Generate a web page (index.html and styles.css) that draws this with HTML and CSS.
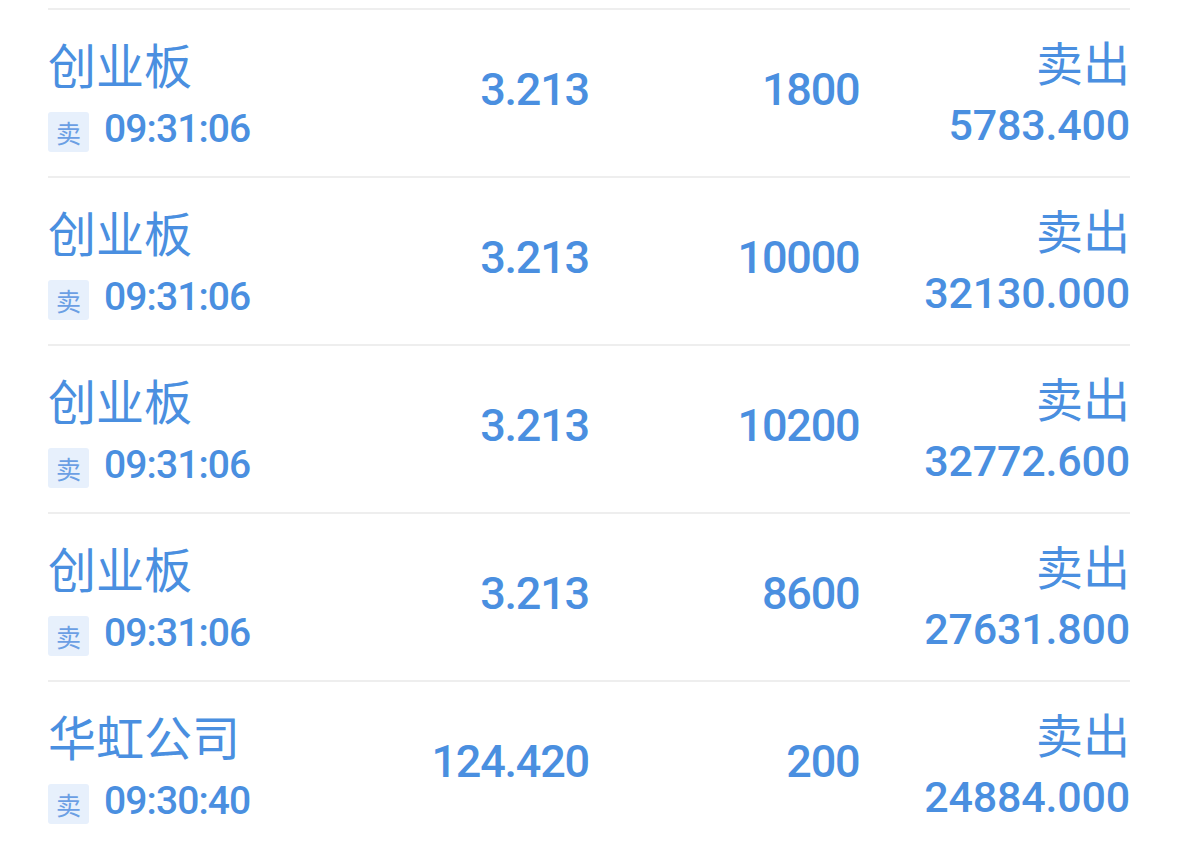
FILE: index.html
```html
<!DOCTYPE html>
<html lang="zh-CN">
<head>
<meta charset="utf-8">
<title>成交明细</title>
<link rel="stylesheet" href="styles.css">
</head>
<body>
<div class="list">
  <div class="row">
    <div class="col-name">
      <div class="name">创业板</div>
      <div class="sub"><span class="badge">卖</span><span class="time">09:31:06</span></div>
    </div>
    <div class="num">3.213</div>
    <div class="num">1800</div>
    <div class="col-right">
      <div class="dir">卖出</div>
      <div class="amount">5783.400</div>
    </div>
  </div>
  <div class="row">
    <div class="col-name">
      <div class="name">创业板</div>
      <div class="sub"><span class="badge">卖</span><span class="time">09:31:06</span></div>
    </div>
    <div class="num">3.213</div>
    <div class="num">10000</div>
    <div class="col-right">
      <div class="dir">卖出</div>
      <div class="amount">32130.000</div>
    </div>
  </div>
  <div class="row">
    <div class="col-name">
      <div class="name">创业板</div>
      <div class="sub"><span class="badge">卖</span><span class="time">09:31:06</span></div>
    </div>
    <div class="num">3.213</div>
    <div class="num">10200</div>
    <div class="col-right">
      <div class="dir">卖出</div>
      <div class="amount">32772.600</div>
    </div>
  </div>
  <div class="row">
    <div class="col-name">
      <div class="name">创业板</div>
      <div class="sub"><span class="badge">卖</span><span class="time">09:31:06</span></div>
    </div>
    <div class="num">3.213</div>
    <div class="num">8600</div>
    <div class="col-right">
      <div class="dir">卖出</div>
      <div class="amount">27631.800</div>
    </div>
  </div>
  <div class="row">
    <div class="col-name">
      <div class="name">华虹公司</div>
      <div class="sub"><span class="badge">卖</span><span class="time">09:30:40</span></div>
    </div>
    <div class="num">124.420</div>
    <div class="num">200</div>
    <div class="col-right">
      <div class="dir">卖出</div>
      <div class="amount">24884.000</div>
    </div>
  </div>
</div>
</body>
</html>
```

FILE: styles.css
```css
html, body {
  margin: 0;
  padding: 0;
  background: #ffffff;
}
body {
  font-family: Roboto, "Noto Sans CJK SC", sans-serif;
  color: #4a8fe0;
  overflow: hidden;
}
.list {
  margin: 8px 49px 0 48px;
}
.row {
  display: grid;
  grid-template-columns: 1fr 1fr 1fr 1fr;
  height: 168px;
  box-sizing: border-box;
  border-top: 2px solid #eeeeee;
  padding-top: 24px;
}
.col-name, .col-right {
  display: flex;
  flex-direction: column;
}
.col-right {
  align-items: flex-end;
}
.name {
  font-family: "Noto Sans CJK SC", sans-serif;
  font-size: 48px;
  line-height: 56px;
  font-weight: 400;
  margin-top: 1px;
}
.dir {
  font-family: "Noto Sans CJK SC", sans-serif;
  font-size: 47px;
  line-height: 52px;
  font-weight: 400;
  margin-top: 1px;
}
.sub {
  display: flex;
  align-items: flex-start;
  margin-top: 14px;
}
.badge {
  display: flex;
  align-items: center;
  justify-content: center;
  width: 41px;
  height: 40px;
  margin-top: 7px;
  border-radius: 3px;
  background: #e7f0fc;
  color: #6b9fe4;
  font-family: "Noto Sans CJK SC", sans-serif;
  font-size: 25px;
  margin-right: 15px;
}
.time {
  font-size: 39px;
  font-weight: 500;
  line-height: 48px;
  letter-spacing: -0.9px;
}
.num {
  text-align: right;
  font-size: 45px;
  font-weight: 500;
  line-height: 48px;
  margin-top: 32px;
  letter-spacing: -1.2px;
}
.amount {
  font-size: 43px;
  font-weight: 500;
  line-height: 48px;
  margin-top: 14px;
  letter-spacing: -0.2px;
}
```
